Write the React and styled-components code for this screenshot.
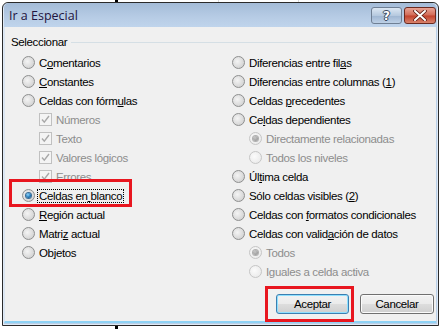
import React from 'react';
import styled, { createGlobalStyle } from 'styled-components';

const Global = createGlobalStyle`
  html, body { margin: 0; padding: 0; background: #fff; }
  body { font-family: "Liberation Sans", Arial, sans-serif; }
`;

const leftItems = [
  { kind: 'radio', text: 'Comentarios', key: 1 },
  { kind: 'radio', text: 'Constantes', key: 0 },
  { kind: 'radio', text: 'Celdas con fórmulas', key: 15 },
  { kind: 'check', text: 'Números', sub: true, disabled: true, checked: true },
  { kind: 'check', text: 'Texto', sub: true, disabled: true, checked: true },
  { kind: 'check', text: 'Valores lógicos', sub: true, disabled: true, checked: true },
  { kind: 'check', text: 'Errores', sub: true, disabled: true, checked: true },
  { kind: 'radio', text: 'Celdas en blanco', key: 9, checked: true, focus: true },
  { kind: 'radio', text: 'Región actual', key: 0 },
  { kind: 'radio', text: 'Matriz actual', key: 5 },
  { kind: 'radio', text: 'Objetos', key: 2 },
];

const rightItems = [
  { kind: 'radio', text: 'Diferencias entre filas', key: 21 },
  { kind: 'radio', text: 'Diferencias entre columnas (1)', key: 28 },
  { kind: 'radio', text: 'Celdas precedentes', key: 7 },
  { kind: 'radio', text: 'Celdas dependientes', key: 2 },
  { kind: 'radio', text: 'Directamente relacionadas', sub: true, disabled: true, checked: true },
  { kind: 'radio', text: 'Todos los niveles', sub: true, disabled: true },
  { kind: 'radio', text: 'Última celda', key: 2 },
  { kind: 'radio', text: 'Sólo celdas visibles (2)', key: 22 },
  { kind: 'radio', text: 'Celdas con formatos condicionales', key: 11 },
  { kind: 'radio', text: 'Celdas con validación de datos', key: 16 },
  { kind: 'radio', text: 'Todos', sub: true, disabled: true, checked: true },
  { kind: 'radio', text: 'Iguales a celda activa', sub: true, disabled: true },
];

function Label({ text, k }) {
  if (k === undefined) return text;
  return (
    <>
      {text.slice(0, k)}
      <U>{text[k]}</U>
      {text.slice(k + 1)}
    </>
  );
}

function Item({ item }) {
  return (
    <Row $sub={item.sub} $disabled={item.disabled}>
      {item.kind === 'radio' ? (
        <Radio $disabled={item.disabled}>
          {item.checked && <Dot $disabled={item.disabled} />}
        </Radio>
      ) : (
        <Check $disabled={item.disabled}>
          {item.checked && (
            <svg width="11" height="11" viewBox="0 0 11 11">
              <path d="M2 5.5 L4.3 8.2 L9 2" fill="none" stroke="#a8a8a8" strokeWidth="1.4" />
            </svg>
          )}
        </Check>
      )}
      <Text $focus={item.focus}>
        <Label text={item.text} k={item.key} />
      </Text>
    </Row>
  );
}

export default function App() {
  return (
    <Page>
      <Global />
      <Grid />
      <Window>
        <TitleBar>
          <Title>Ir a Especial</Title>
          <Caption>
            <HelpBtn>?</HelpBtn>
            <CloseBtn>
              <svg width="14" height="11" viewBox="0 0 14 11">
                <path d="M2 1 L12 10 M12 1 L2 10" stroke="#5a1a12" strokeWidth="3.6" strokeLinecap="round" />
                <path d="M2 1 L12 10 M12 1 L2 10" stroke="#fff" strokeWidth="2" strokeLinecap="round" />
              </svg>
            </CloseBtn>
          </Caption>
        </TitleBar>
        <Body>
          <GroupHead>
            <span>Seleccionar</span>
            <Rule />
          </GroupHead>
          <Columns>
            <Column>
              {leftItems.map((it) => <Item key={it.text} item={it} />)}
            </Column>
            <Column>
              {rightItems.map((it) => <Item key={it.text} item={it} />)}
            </Column>
          </Columns>
          <Footer>
            <Button $default>Aceptar</Button>
            <Button>Cancelar</Button>
          </Footer>
          <Mark style={{ left: 4, top: 152, width: 123, height: 28 }} />
          <Mark style={{ left: 260, top: 259, width: 89, height: 36 }} />
        </Body>
      </Window>
    </Page>
  );
}

const Page = styled.div`
  position: relative;
  width: 442px;
  height: 329px;
  padding: 2px 0 0 2px;
  box-sizing: border-box;
  overflow: hidden;
  background: #fff;
`;

const Grid = styled.div`
  position: absolute;
  inset: 0;
  background:
    linear-gradient(#000, #000) 115px 0 / 3px 3px no-repeat,
    linear-gradient(#d9d9d9, #d9d9d9) 218px 0 / 1px 3px no-repeat,
    linear-gradient(#d9d9d9, #d9d9d9) 298px 0 / 1px 3px no-repeat,
    linear-gradient(#000, #000) 115px 326px / 3px 3px no-repeat;
`;

const Window = styled.div`
  position: relative;
  width: 437px;
  height: 324px;
  box-sizing: border-box;
  border: 1px solid #2b2b2b;
  border-radius: 6px 6px 0 0;
  background: #b9cfe7;
  padding: 0 2px 2px 1px;
  display: flex;
  flex-direction: column;
  box-shadow: inset 0 0 0 1px #dfe9f5;
`;

const TitleBar = styled.div`
  height: 24px;
  flex: none;
  display: flex;
  align-items: center;
  justify-content: space-between;
  padding: 0 0 0 5px;
  border-radius: 5px 5px 0 0;
  background: linear-gradient(#a4bcd8, #b7cce5 60%, #bfd4ec);
`;

const Title = styled.div`
  font-family: "Open Sans", sans-serif;
  font-size: 12.5px;
  color: #1f1440;
  margin-top: 1px;
`;

const Caption = styled.div`
  display: flex;
  align-items: flex-start;
  align-self: flex-start;
  margin-top: 4px;
`;

const HelpBtn = styled.div`
  width: 29px;
  height: 15px;
  margin-right: 2px;
  border: 1px solid #6f7f94;
  border-radius: 3px;
  background: linear-gradient(#dce7f3, #b6c9df 50%, #9fb6d2 52%, #bdd0e6);
  display: flex;
  align-items: center;
  justify-content: center;
  color: #fff;
  font-family: "DejaVu Sans", sans-serif;
  font-weight: bold;
  font-size: 12px;
  text-shadow: 0 0 1px #3a4a60, 1px 0 0 #3a4a60, -1px 0 0 #3a4a60, 0 1px 0 #3a4a60, 0 -1px 0 #3a4a60;
`;

const CloseBtn = styled.div`
  width: 30px;
  height: 15px;
  border: 1px solid #6b2a20;
  border-radius: 3px;
  background: linear-gradient(#e8a394, #d26b58 48%, #c2412c 52%, #d8836c);
  display: flex;
  align-items: center;
  justify-content: center;
`;

const Body = styled.div`
  position: relative;
  flex: 1;
  background: #f0f0f0;
  border-left: 1px solid #dbe6f2;
  border-bottom: 2px solid #8fd2f4;
  padding: 7px 0 0 6px;
  display: flex;
  flex-direction: column;
  font-size: 11.5px;
  letter-spacing: -0.35px;
  color: #000;
`;

const GroupHead = styled.div`
  display: flex;
  align-items: center;
  gap: 4px;
  height: 16px;
  margin-right: 4px;
`;

const Rule = styled.div`
  flex: 1;
  height: 1px;
  background: #d5dfe5;
`;

const Columns = styled.div`
  display: grid;
  grid-template-columns: 210px 1fr;
  padding: 3px 0 0 11px;
`;

const Column = styled.div`
  display: flex;
  flex-direction: column;
`;

const Row = styled.div`
  height: 19px;
  display: flex;
  align-items: center;
  gap: 2px;
  padding-left: ${(p) => (p.$sub ? '17px' : '0')};
  color: ${(p) => (p.$disabled ? '#8d8d8d' : '#000')};
  white-space: nowrap;
`;

const Radio = styled.div`
  width: 11px;
  height: 11px;
  border-radius: 50%;
  border: 1px solid ${(p) => (p.$disabled ? '#c6c6c6' : '#8e8f8f')};
  background: ${(p) =>
    p.$disabled
      ? 'radial-gradient(circle at 40% 40%, #fbfbfb, #e6e6e6)'
      : 'radial-gradient(circle at 40% 40%, #f4f4f4, #d6d6d6 70%, #c4c4c4)'};
  display: flex;
  align-items: center;
  justify-content: center;
  flex: none;
`;

const Dot = styled.div`
  width: 5px;
  height: 5px;
  border-radius: 50%;
  background: ${(p) =>
    p.$disabled
      ? 'radial-gradient(circle at 40% 35%, #c8c8c8, #8a8a8a)'
      : 'radial-gradient(circle at 40% 35%, #8fd6ff, #1a6fb0 60%, #0c3f70)'};
  box-shadow: 0 0 0 1px ${(p) => (p.$disabled ? '#b0b0b0' : '#3b6c95')};
`;

const Check = styled.div`
  width: 11px;
  height: 11px;
  border: 1px solid #c0c0c0;
  background: #f4f4f4;
  display: flex;
  align-items: center;
  justify-content: center;
  flex: none;
`;

const Text = styled.span`
  padding: 0 1px;
  border: 1px dotted ${(p) => (p.$focus ? '#000' : 'transparent')};
`;

const U = styled.span`
  text-decoration: underline;
`;

const Footer = styled.div`
  margin-top: auto;
  margin-bottom: 7px;
  display: flex;
  justify-content: flex-end;
  gap: 11px;
  padding-right: 2px;
`;

const Button = styled.div`
  width: ${(p) => (p.$default ? '73px' : '74px')};
  height: 20px;
  box-sizing: border-box;
  display: flex;
  align-items: center;
  justify-content: center;
  border: 1px solid ${(p) => (p.$default ? '#3c7fb1' : '#707070')};
  border-radius: 3px;
  background: linear-gradient(#f2f2f2, #ebebeb 48%, #dddddd 52%, #cfcfcf);
  box-shadow: inset 0 0 0 1px ${(p) => (p.$default ? '#8ee0ff' : '#fbfbfb')};
`;

const Mark = styled.div`
  position: absolute;
  border: 3px solid #e8161f;
  box-sizing: border-box;
  pointer-events: none;
`;
